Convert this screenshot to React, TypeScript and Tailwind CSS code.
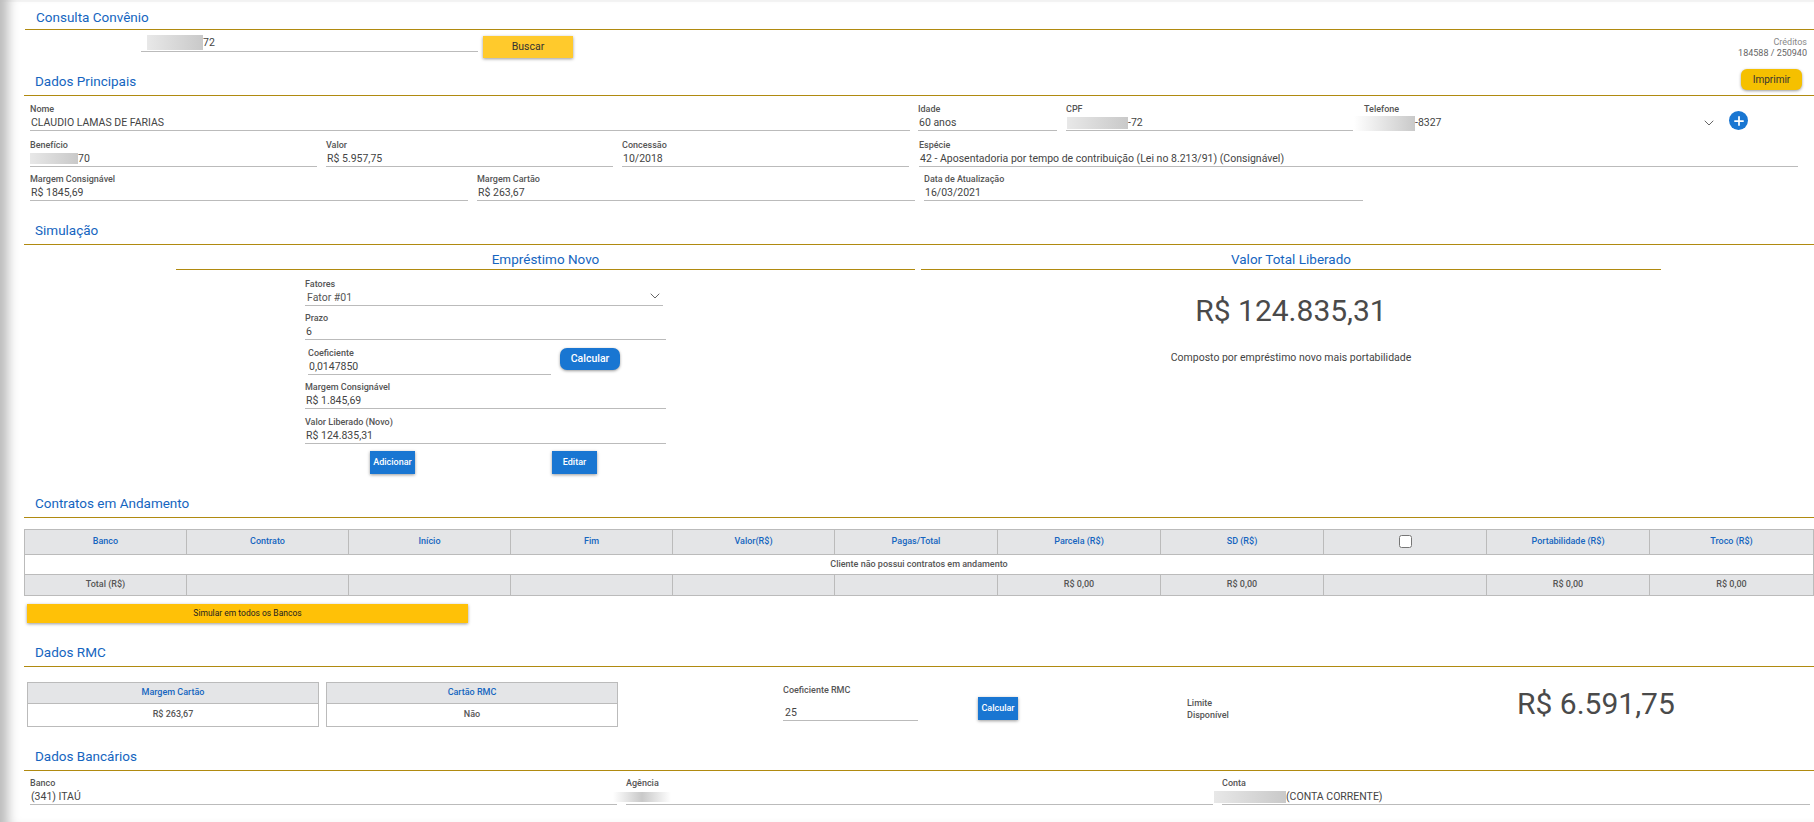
import { ChevronDown, Plus } from 'lucide-react'

const Section = ({ title, right, className = '' }: { title: string; right?: React.ReactNode; className?: string }) => (
  <div className={`ml-[24px] flex h-[28px] items-center justify-between border-b border-[#b08a10] pl-[11px] pr-[12px] ${className}`}>
    <span className="text-[13.5px] leading-none text-[#1565c0]">{title}</span>
    {right}
  </div>
)

function Redacted({ className }: { className: string }) {
  return <span className={`inline-block shrink-0 bg-linear-to-r from-[#e8e8e8] to-[#c9c9c9] ${className}`} />
}

interface FieldProps {
  label: string
  value?: string
  className: string
  redacted?: React.ReactNode
}

function Field({ label, value, className, redacted }: FieldProps) {
  return (
    <div className={`shrink-0 ${className}`}>
      <div className="h-[12px] text-[9px] font-medium leading-[12px] text-[#555]">{label}</div>
      <div className="flex h-[16px] items-center border-b border-[#bbb] pl-[1px] text-[10.5px] leading-[15px] text-[#444]">
        {redacted}
        {value}
      </div>
    </div>
  )
}

const columns = ['Banco', 'Contrato', 'Início', 'Fim', 'Valor(R$)', 'Pagas/Total', 'Parcela (R$)', 'SD (R$)', '', 'Portabilidade (R$)', 'Troco (R$)']
const totals = ['Total (R$)', '', '', '', '', '', 'R$ 0,00', 'R$ 0,00', '', 'R$ 0,00', 'R$ 0,00']

export default function App() {
  return (
    <div className="h-[822px] w-[1814px] overflow-hidden bg-white pt-[2px] font-['Roboto',sans-serif] shadow-[inset_16px_0_12px_-8px_#bbb,inset_0_2px_0_#f6f6f6]">
      {/* Consulta */}
      <Section title="Consulta Convênio" className="ml-[25px] pt-[5px]" />
      <div className="flex h-[38px]">
        <div className="ml-[141px] mt-[4px] flex h-[18px] w-[337px] items-center border-b border-[#bbb] pl-[6px] text-[10.5px] text-[#444]">
          <Redacted className="h-[15px] w-[56px]" />
          72
        </div>
        <button className="ml-[5px] mt-[6px] h-[22px] w-[90px] bg-[#ffca2c] text-[10.5px] text-[#333] shadow-[0_1px_3px_rgba(0,0,0,0.4)]">
          Buscar
        </button>
        <div className="ml-auto mr-[7px] mt-[7px] text-right text-[9px] leading-[11px] text-[#666]">
          <div className="text-[#888]">Créditos</div>
          <div>184588 / 250940</div>
        </div>
      </div>

      {/* Dados principais */}
      <Section
        title="Dados Principais"
        right={
          <button className="-mt-[4px] h-[21px] w-[61px] rounded-[6px] bg-[#f5c000] text-[10px] text-[#333] shadow-[0_1px_3px_rgba(0,0,0,0.4)]">
            Imprimir
          </button>
        }
      />
      <div className="ml-[30px] mt-[7px] flex">
        <Field className="w-[880px]" label="Nome" value="CLAUDIO LAMAS DE FARIAS" />
        <Field className="ml-[8px] w-[139px]" label="Idade" value="60 anos" />
        <Field className="ml-[9px] w-[287px]" label="CPF" value="-72" redacted={<Redacted className="h-[12px] w-[61px]" />} />
        <div className="ml-[11px] w-[365px]">
          <div className="h-[12px] text-[9px] font-medium leading-[12px] text-[#555]">Telefone</div>
          <div className="-ml-[10px] flex h-[16px] items-center text-[10.5px] text-[#444]">
            <span className="inline-block h-[15px] w-[61px] shrink-0 bg-linear-to-r from-white to-[#c9c9c9]" />
            -8327
            <ChevronDown className="ml-auto mr-[12px] h-[16px] w-[16px] text-[#666]" strokeWidth={1.5} />
          </div>
        </div>
        <div className="mt-[8px] flex h-[19px] w-[19px] items-center justify-center rounded-full bg-[#1976d2] text-white">
          <Plus className="h-[14px] w-[14px]" strokeWidth={3} />
        </div>
      </div>
      <div className="ml-[30px] mt-[8px] flex">
        <Field className="w-[287px]" label="Benefício" value="70" redacted={<Redacted className="-ml-[1px] h-[11px] w-[48px]" />} />
        <Field className="ml-[9px] w-[287px]" label="Valor" value="R$ 5.957,75" />
        <Field className="ml-[9px] w-[287px]" label="Concessão" value="10/2018" />
        <Field className="ml-[10px] w-[879px]" label="Espécie" value="42 - Aposentadoria por tempo de contribuição (Lei no 8.213/91) (Consignável)" />
      </div>
      <div className="ml-[30px] mt-[6px] flex">
        <Field className="w-[438px]" label="Margem Consignável" value="R$ 1845,69" />
        <Field className="ml-[9px] w-[438px]" label="Margem Cartão" value="R$ 263,67" />
        <Field className="ml-[9px] w-[439px]" label="Data de Atualização" value="16/03/2021" />
      </div>

      {/* Simulação */}
      <Section title="Simulação" className="mt-[16px]" />
      <div className="flex">
        <div className="ml-[176px] w-[739px]">
          <div className="h-[25px] border-b border-[#b08a10] pt-[6px] text-center text-[13.5px] leading-[16px] text-[#1565c0]">Empréstimo Novo</div>
          <div className="ml-[129px] w-[361px]">
            <div className="mt-[8px] w-[358px]">
              <div className="h-[12px] text-[9px] font-medium leading-[12px] text-[#555]">Fatores</div>
              <div className="flex h-[16px] items-center border-b border-[#bbb] pl-[2px] text-[10.5px] text-[#555]">
                Fator #01
                <ChevronDown className="-mt-[4px] ml-auto h-[16px] w-[16px] text-[#666]" strokeWidth={1.5} />
              </div>
            </div>
            <Field className="mt-[6px] w-[361px]" label="Prazo" value="6" />
            <div className="flex">
              <Field className="ml-[3px] mt-[7px] w-[243px]" label="Coeficiente" value="0,0147850" />
              <button className="ml-[9px] mt-[8px] h-[22px] w-[60px] rounded-[7px] bg-[#1976d2] text-[10.5px] font-medium text-white shadow-[0_1px_3px_rgba(0,0,0,0.4)]">
                Calcular
              </button>
            </div>
            <Field className="mt-[6px] w-[361px]" label="Margem Consignável" value="R$ 1.845,69" />
            <Field className="mt-[7px] w-[361px]" label="Valor Liberado (Novo)" value="R$ 124.835,31" />
            <div className="mt-[7px] flex">
              <button className="ml-[65px] h-[23px] w-[45px] bg-[#1976d2] text-[9px] font-medium text-white shadow-[0_1px_3px_rgba(0,0,0,0.4)]">Adicionar</button>
              <button className="ml-[137px] h-[23px] w-[45px] bg-[#1976d2] text-[9px] font-medium text-white shadow-[0_1px_3px_rgba(0,0,0,0.4)]">Editar</button>
            </div>
          </div>
        </div>
        <div className="ml-[6px] w-[740px] text-center">
          <div className="h-[25px] border-b border-[#b08a10] pt-[6px] text-[13.5px] leading-[16px] text-[#1565c0]">Valor Total Liberado</div>
          <div className="mt-[23px] text-[30px] leading-[36px] text-[#4a4a4a]">R$ 124.835,31</div>
          <div className="mt-[22px] text-[10.5px] leading-[14px] text-[#444]">Composto por empréstimo novo mais portabilidade</div>
        </div>
      </div>

      {/* Contratos */}
      <Section title="Contratos em Andamento" className="mt-[16px]" />
      <table className="ml-[24px] mt-[11px] w-[1789px] table-fixed border-collapse text-center text-[9px]">
        <colgroup>
          {columns.map((_, i) => (
            <col key={i} className={i < 5 ? 'w-[162px]' : i < 10 ? 'w-[163px]' : 'w-[164px]'} />
          ))}
        </colgroup>
        <thead>
          <tr className="h-[25px] bg-[#e4e5e7]">
            {columns.map((c, i) => (
              <th key={i} className="border border-[#bbb] font-medium text-[#1565c0]">
                {c ? c : <input type="checkbox" className="mx-auto -mt-[1px] block h-[13px] w-[13px]" />}
              </th>
            ))}
          </tr>
        </thead>
        <tbody className="text-[#555]">
          <tr className="h-[20px]">
            <td colSpan={11} className="border border-[#bbb] font-medium">Cliente não possui contratos em andamento</td>
          </tr>
          <tr className="h-[21px] bg-[#e4e5e7]">
            {totals.map((t, i) => (
              <td key={i} className="border border-[#bbb] font-medium">{t}</td>
            ))}
          </tr>
        </tbody>
      </table>
      <button className="ml-[27px] mt-[8px] block h-[19px] w-[441px] bg-[#ffc107] text-[8.5px] text-[#222] shadow-[0_1px_3px_rgba(0,0,0,0.4)]">
        Simular em todos os Bancos
      </button>

      {/* RMC */}
      <Section title="Dados RMC" className="mt-[16px]" />
      <div className="flex">
        <div className="ml-[27px] mt-[15px] w-[292px] border border-[#bbb] text-center text-[9px]">
          <div className="flex h-[21px] items-center justify-center border-b border-[#bbb] bg-[#e4e5e7] font-medium text-[#1565c0]">Margem Cartão</div>
          <div className="flex h-[22px] items-center justify-center font-medium text-[#555]">R$ 263,67</div>
        </div>
        <div className="ml-[7px] mt-[15px] w-[292px] border border-[#bbb] text-center text-[9px]">
          <div className="flex h-[21px] items-center justify-center border-b border-[#bbb] bg-[#e4e5e7] font-medium text-[#1565c0]">Cartão RMC</div>
          <div className="flex h-[22px] items-center justify-center font-medium text-[#555]">Não</div>
        </div>
        <div className="ml-[165px] mt-[17px] w-[135px]">
          <div className="h-[12px] text-[9px] font-medium leading-[12px] text-[#555]">Coeficiente RMC</div>
          <div className="mt-[9px] flex h-[16px] items-center border-b border-[#bbb] pl-[2px] text-[10.5px] text-[#444]">25</div>
        </div>
        <button className="ml-[60px] mt-[30px] h-[23px] w-[40px] bg-[#1976d2] text-[9px] font-medium text-white shadow-[0_1px_3px_rgba(0,0,0,0.4)]">
          Calcular
        </button>
        <div className="ml-[169px] mt-[30px] w-[69px] text-[9px] font-medium leading-[12px] text-[#555]">Limite Disponível</div>
        <div className="ml-[261px] mt-[19px] text-[30px] leading-[36px] text-[#4a4a4a]">R$ 6.591,75</div>
      </div>

      {/* Bancários */}
      <Section title="Dados Bancários" className="mt-[16px]" />
      <div className="ml-[30px] mt-[6px] flex">
        <Field className="w-[587px]" label="Banco" value="(341) ITAÚ" />
        <Field className="ml-[9px] w-[587px]" label="Agência" redacted={<span className="-ml-[14px] inline-block h-[10px] w-[58px] bg-linear-to-r from-white via-[#c9c9c9] to-white" />} />
        <Field className="ml-[9px] w-[588px]" label="Conta" value="(CONTA CORRENTE)" redacted={<Redacted className="-ml-[9px] h-[12px] w-[72px]" />} />
      </div>
    </div>
  )
}
